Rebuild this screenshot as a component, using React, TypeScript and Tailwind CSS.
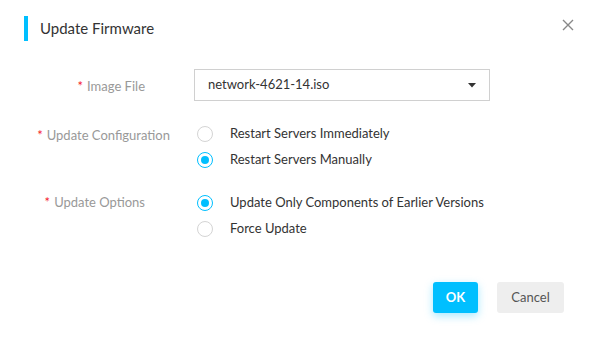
import { useState } from 'react';

type Option = { value: string; label: string };

const configOptions: Option[] = [
  { value: 'immediate', label: 'Restart Servers Immediately' },
  { value: 'manual', label: 'Restart Servers Manually' },
];

const updateOptions: Option[] = [
  { value: 'earlier', label: 'Update Only Components of Earlier Versions' },
  { value: 'force', label: 'Force Update' },
];

const Radio = ({ checked, label, onClick }: { checked: boolean; label: string; onClick: () => void }) => (
  <button type="button" onClick={onClick} className="flex items-center h-[26px] text-left">
    <span
      className={`w-[16px] h-[16px] rounded-full border flex items-center justify-center ml-[3px] ${
        checked ? 'border-[#00bfff]' : 'border-[#d4d4d4]'
      }`}
    >
      {checked && <span className="w-[8px] h-[8px] rounded-full bg-[#00bfff]" />}
    </span>
    <span className="ml-[17px] text-[13px] text-[#333]">{label}</span>
  </button>
);

const FieldLabel = ({ text, className = '' }: { text: string; className?: string }) => (
  <div className={`text-right text-[13px] text-[#999] ${className}`}>
    <span className="text-[#f5222d] mr-[4px]">*</span>
    {text}
  </div>
);

export default function App() {
  const [config, setConfig] = useState('manual');
  const [option, setOption] = useState('earlier');

  return (
    <div
      className="relative w-[599px] h-[341px] bg-white"
      style={{ fontFamily: 'Lato, "Open Sans", sans-serif' }}
    >
      {/* Header */}
      <div className="flex items-center pt-[16px] pl-[24px]">
        <div className="w-[4px] h-[25px] bg-[#00bfff]" />
        <h1 className="ml-[12px] text-[15px] text-[#333]">Update Firmware</h1>
      </div>
      <button type="button" className="absolute top-[18px] right-[24px] p-[1px] text-[#888]">
        <svg width="12" height="12" viewBox="0 0 12 12" fill="none" stroke="currentColor" strokeWidth="1.4">
          <path d="M1 1L11 11M11 1L1 11" />
        </svg>
      </button>

      {/* Form */}
      <div className="grid grid-cols-[170px_296px] gap-x-[24px] mt-[28px]">
        <div className="flex items-center justify-end h-[32px] pt-[3px]">
          <FieldLabel text="Image File" className="pr-[25px]" />
        </div>
        <div className="flex items-center justify-between h-[32px] border border-[#d0d0d0] pl-[13px] pr-[13px] text-[13px] text-[#333]">
          <span>network-4621-14.iso</span>
          <svg width="8" height="5" viewBox="0 0 8 5">
            <path d="M0 0H8L4 4.5Z" fill="#333" />
          </svg>
        </div>

        <div className="flex justify-end items-center self-start mt-[20px] h-[26px] pt-[3px]">
          <FieldLabel text="Update Configuration" />
        </div>
        <div className="flex flex-col mt-[20px]">
          {configOptions.map(o => (
            <Radio key={o.value} checked={config === o.value} label={o.label} onClick={() => setConfig(o.value)} />
          ))}
        </div>

        <div className="flex justify-end items-center self-start mt-[17px] h-[26px]">
          <FieldLabel text="Update Options" className="pr-[25px]" />
        </div>
        <div className="flex flex-col mt-[17px]">
          {updateOptions.map(o => (
            <Radio key={o.value} checked={option === o.value} label={o.label} onClick={() => setOption(o.value)} />
          ))}
        </div>
      </div>

      {/* Footer */}
      <div className="flex justify-end gap-[19px] pr-[35px] mt-[40px]">
        <button
          type="button"
          className="w-[45px] h-[31px] rounded-[3px] bg-[#00bfff] text-white text-[13px] font-bold shadow-[0_3px_8px_rgba(0,191,255,0.35)]"
        >
          OK
        </button>
        <button type="button" className="w-[67px] h-[31px] rounded-[3px] bg-[#eeeeee] text-[#555] text-[13px]">
          Cancel
        </button>
      </div>
    </div>
  );
}
